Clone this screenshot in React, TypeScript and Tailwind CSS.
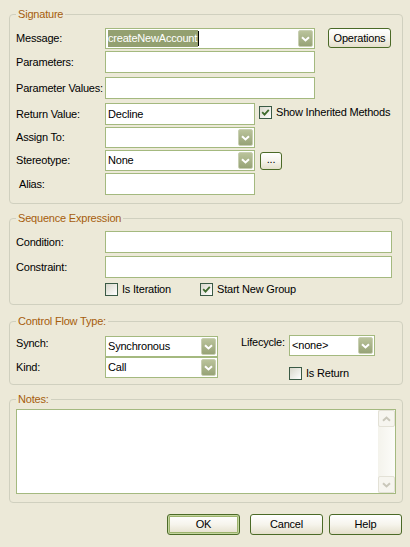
import type { ReactNode } from "react";

function Chevron({ color = "#ffffff" }: { color?: string }) {
  return (
    <svg width="9" height="6" viewBox="0 0 9 6" className="block">
      <path d="M1 1.2 L4.5 4.5 L8 1.2" fill="none" stroke={color} strokeWidth="2" />
    </svg>
  );
}

function Input({ w, h = 22, children }: { w: string; h?: number; children?: ReactNode }) {
  return (
    <div
      className={`${w} flex items-center border border-[#A4B97F] bg-white pl-[2px] text-black`}
      style={{ height: h }}
    >
      {children}
    </div>
  );
}

function Combo({ w, children }: { w: string; children?: ReactNode }) {
  return (
    <div className={`${w} flex h-[21px] items-stretch border border-[#A4B97F] bg-white p-[1px]`}>
      <div className="flex flex-1 items-center overflow-hidden pl-[1px] text-black">{children}</div>
      <div className="flex w-[15px] items-center justify-center rounded-[2px] border border-[#C8CFB2] bg-gradient-to-b from-[#BAC39B] to-[#97A377]">
        <Chevron />
      </div>
    </div>
  );
}

function Button({ w, h = 21, def, children }: { w: string; h?: number; def?: boolean; children: ReactNode }) {
  return (
    <button
      className={`${w} flex items-center justify-center rounded-[3px] border border-[#4B6A27] bg-gradient-to-b from-white via-[#F6F4EC] to-[#E4DFCB] text-black ${
        def ? "shadow-[inset_0_0_0_1px_#C4D59F,inset_0_0_0_2px_#9CB36C]" : ""
      }`}
      style={{ height: h }}
    >
      {children}
    </button>
  );
}

function Check({ checked, label }: { checked?: boolean; label: string }) {
  return (
    <div className="flex h-[14px] items-center">
      <div className="flex h-[13px] w-[13px] items-center justify-center border border-[#3A5A45] bg-gradient-to-br from-[#D8D7CB] to-white">
        {checked && (
          <svg width="9" height="9" viewBox="0 0 9 9">
            <path d="M1.2 4.2 L3.5 6.6 L7.8 1.8" fill="none" stroke="#3E6A2D" strokeWidth="1.8" />
          </svg>
        )}
      </div>
      <span className="ml-[4px]">{label}</span>
    </div>
  );
}

function Label({ children, className = "" }: { children: ReactNode; className?: string }) {
  return <div className={`w-[89px] shrink-0 ${className}`}>{children}</div>;
}

function Group({ title, h, mt, children }: { title: string; h: string; mt: string; children: ReactNode }) {
  return (
    <fieldset className={`${h} ${mt} rounded-[4px] border border-[#D0D0BF]`}>
      <legend className="ml-[6px] px-[2px] leading-[12px] text-[#A65D0C]">{title}</legend>
      <div className="pl-[6px]">{children}</div>
    </fieldset>
  );
}

export default function App() {
  return (
    <div className="h-[547px] w-[410px] overflow-hidden bg-[#ECE9D8] pl-[9px] pr-[7px] font-['Liberation_Sans',Arial,sans-serif] text-[11px] leading-[13px] tracking-[-0.2px] text-black">
      {/* Signature */}
      <Group title="Signature" h="h-[196px]" mt="mt-[8px]">
        <div className="mt-[8px] flex h-[21px] items-center">
          <Label>Message:</Label>
          <Combo w="w-[210px]">
            <span className="flex h-[17px] items-center bg-[#93A070] pr-[1px] text-white">createNewAccount</span>
            <span className="h-[15px] w-px bg-black" />
          </Combo>
          <div className="ml-[13px] self-start">
            <Button w="w-[63px]" h={20}>
              Operations
            </Button>
          </div>
        </div>
        <div className="mt-[2px] flex h-[22px] items-center">
          <Label>Parameters:</Label>
          <Input w="w-[210px]" />
        </div>
        <div className="mt-[4px] flex h-[22px] items-center">
          <Label>Parameter Values:</Label>
          <Input w="w-[210px]" />
        </div>
        <div className="mt-[4px] flex h-[22px] items-center">
          <Label>Return Value:</Label>
          <Input w="w-[150px]">Decline</Input>
          <div className="ml-[4px] -mt-[3px]">
            <Check checked label="Show Inherited Methods" />
          </div>
        </div>
        <div className="mt-[2px] flex h-[21px] items-center">
          <Label>Assign To:</Label>
          <Combo w="w-[150px]" />
        </div>
        <div className="mt-[2px] flex h-[21px] items-center">
          <Label>Stereotype:</Label>
          <Combo w="w-[150px]">None</Combo>
          <div className="ml-[5px]">
            <Button w="w-[22px]" h={18}>
              <span className="-mt-[3px]">...</span>
            </Button>
          </div>
        </div>
        <div className="mt-[2px] flex h-[22px] items-center">
          <Label className="pl-[3px]">Alias:</Label>
          <Input w="w-[150px]" />
        </div>
      </Group>

      {/* Sequence Expression */}
      <Group title="Sequence Expression" h="h-[93px]" mt="mt-[8px]">
        <div className="mt-[7px] flex h-[22px] items-center">
          <Label>Condition:</Label>
          <Input w="w-[287px]" />
        </div>
        <div className="mt-[3px] flex h-[22px] items-center">
          <Label>Constraint:</Label>
          <Input w="w-[287px]" />
        </div>
        <div className="mt-[4px] flex">
          <div className="ml-[89px] w-[95px]">
            <Check label="Is Iteration" />
          </div>
          <Check checked label="Start New Group" />
        </div>
      </Group>

      {/* Control Flow Type */}
      <Group title="Control Flow Type:" h="h-[70px]" mt="mt-[10px]">
        <div className="mt-[8px] flex h-[22px] items-start">
          <Label className="pt-[2px]">Synch:</Label>
          <div className="mt-[1px]">
            <Combo w="w-[113px]">Synchronous</Combo>
          </div>
          <div className="ml-[23px] w-[48px] pt-[1px]">Lifecycle:</div>
          <Combo w="w-[86px]">{"<none>"}</Combo>
        </div>
        <div className="flex h-[21px] items-center">
          <Label>Kind:</Label>
          <Combo w="w-[113px]">Call</Combo>
          <div className="ml-[71px] mt-[11px]">
            <Check label="Is Return" />
          </div>
        </div>
      </Group>

      {/* Notes */}
      <Group title="Notes:" h="h-[110px]" mt="mt-[8px]">
        <div className="mt-[4px] flex h-[85px] w-[380px] justify-end border border-[#A4B97F] bg-white">
          <div className="flex w-[17px] flex-col justify-between bg-gradient-to-r from-[#F4F3EC] to-[#FCFCF9]">
            <div className="flex h-[17px] items-center justify-center rounded-[2px] border border-[#E3E1D6] bg-[#F6F5EF]">
              <svg width="9" height="6" viewBox="0 0 9 6" className="block">
                <path d="M1 4.8 L4.5 1.5 L8 4.8" fill="none" stroke="#C9C7BA" strokeWidth="2" />
              </svg>
            </div>
            <div className="flex h-[17px] items-center justify-center rounded-[2px] border border-[#E3E1D6] bg-[#F6F5EF]">
              <Chevron color="#C9C7BA" />
            </div>
          </div>
        </div>
      </Group>

      {/* Buttons */}
      <div className="mt-[11px] flex justify-end pr-[1px]">
        <Button w="w-[73px]" def>
          OK
        </Button>
        <div className="ml-[10px]">
          <Button w="w-[73px]">Cancel</Button>
        </div>
        <div className="ml-[6px]">
          <Button w="w-[73px]">Help</Button>
        </div>
      </div>
    </div>
  );
}
